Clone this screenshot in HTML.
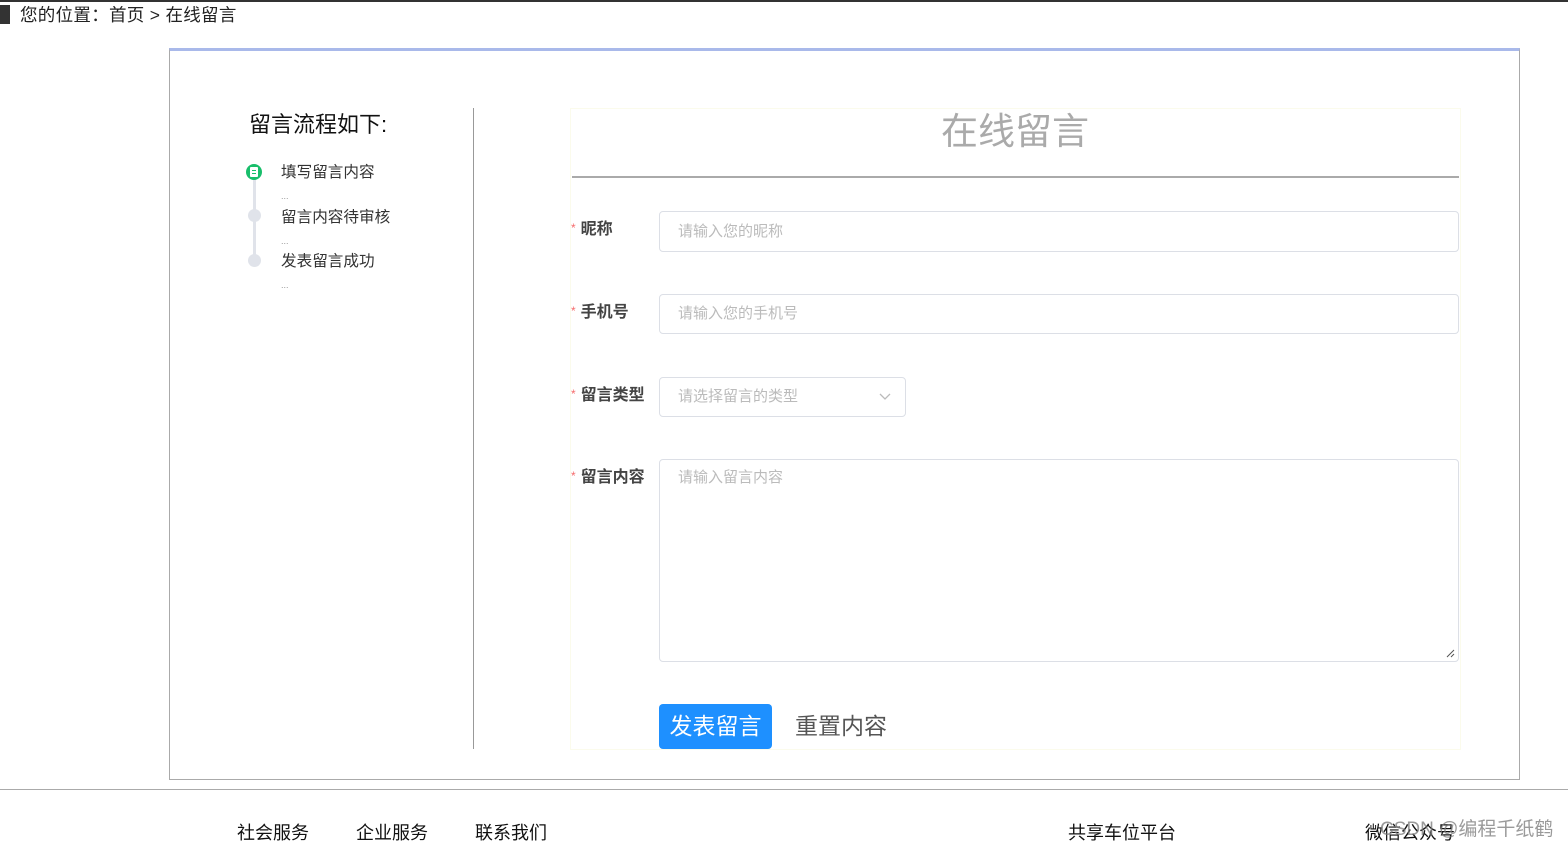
<!DOCTYPE html>
<html><head><meta charset="utf-8"><style>
*{margin:0;padding:0;box-sizing:border-box}
body{width:1568px;height:849px;position:relative;overflow:hidden;background:#fff;font-family:"Liberation Sans","Noto Sans CJK SC",sans-serif;color:#222}
.a{position:absolute;white-space:nowrap}
.inp{position:absolute;border:1px solid #dcdfe6;border-radius:4px;background:#fff;color:#bbb;font-size:15px;padding-left:18px}
.lab{position:absolute;font-size:16px;font-weight:bold;color:#444;line-height:20px}
.lab b{color:#f56c6c;font-size:12px;font-weight:normal;margin-right:5px;position:relative;top:-2px}
</style></head><body>
<div class="a" style="left:0;top:0;width:1568px;height:2px;background:#333"></div>
<div class="a" style="left:0;top:5px;width:10px;height:19px;background:#333"></div>
<div class="a" style="left:20px;top:4px;font-size:17.5px;line-height:22px;letter-spacing:0.3px">您的位置：首页 &gt; 在线留言</div>
<div class="a" style="left:169px;top:48px;width:1351px;height:732px;border:1px solid #aaa;border-top:3px solid #a9b9ea"></div>
<div class="a" style="left:473px;top:108px;width:1px;height:641px;background:#999"></div>
<div class="a" style="left:249px;top:110px;font-size:22px;line-height:30px;color:#111">留言流程如下:</div>
<div class="a" style="left:253px;top:178px;width:3px;height:80px;background:#e0e3ea"></div>
<div class="a" style="left:246px;top:164px;width:16px;height:16px;border-radius:50%;background:#19be6b"><div style="position:absolute;left:4px;top:3px;width:8px;height:10px;background:#fff;border-radius:1px"></div><div style="position:absolute;left:6px;top:6px;width:4px;height:1px;background:#19be6b;box-shadow:0 3px 0 #19be6b"></div></div>
<div class="a" style="left:248px;top:209px;width:13px;height:13px;border-radius:50%;background:#e0e3ea"></div>
<div class="a" style="left:248px;top:254px;width:13px;height:13px;border-radius:50%;background:#e0e3ea"></div>
<div class="a" style="left:281px;top:163px;font-size:15.6px;line-height:20px;color:#333">填写留言内容</div>
<div class="a" style="left:281px;top:191px;font-size:9px;color:#999">...</div>
<div class="a" style="left:281px;top:208px;font-size:15.6px;line-height:20px;color:#333">留言内容待审核</div>
<div class="a" style="left:281px;top:236px;font-size:9px;color:#999">...</div>
<div class="a" style="left:281px;top:252px;font-size:15.6px;line-height:20px;color:#333">发表留言成功</div>
<div class="a" style="left:281px;top:280px;font-size:9px;color:#999">...</div>
<div class="a" style="left:570px;top:108px;width:891px;height:642px;border:1px solid #fbfbec"></div>
<div class="a" style="left:0;top:109px;width:2030px;text-align:center;font-size:37px;line-height:46px;color:#aaa">在线留言</div>
<div class="a" style="left:572px;top:176px;width:887px;height:2px;background:#aaa"></div>
<div class="lab" style="left:571px;top:220px"><b>*</b>昵称</div>
<div class="inp" style="left:659px;top:211px;width:800px;height:41px;line-height:39px">请输入您的昵称</div>
<div class="lab" style="left:571px;top:303px"><b>*</b>手机号</div>
<div class="inp" style="left:659px;top:294px;width:800px;height:40px;line-height:38px">请输入您的手机号</div>
<div class="lab" style="left:571px;top:386px"><b>*</b>留言类型</div>
<div class="inp" style="left:659px;top:377px;width:247px;height:40px;line-height:38px">请选择留言的类型<svg style="position:absolute;right:14px;top:15px" width="12" height="8" viewBox="0 0 12 8"><path d="M1 1l5 5 5-5" fill="none" stroke="#bbb" stroke-width="1.3"/></svg></div>
<div class="lab" style="left:571px;top:468px"><b>*</b>留言内容</div>
<div class="inp" style="left:659px;top:459px;width:800px;height:203px;line-height:36px;padding-top:0">请输入留言内容<svg style="position:absolute;right:3px;bottom:3px" width="9" height="9" viewBox="0 0 9 9"><path d="M1 8L8 1M5 8L8 5" stroke="#555" stroke-width="1"/></svg></div>
<div class="a" style="left:659px;top:704px;width:113px;height:45px;background:#1e90ff;border-radius:4px;color:#fff;font-size:23px;line-height:44px;text-align:center">发表留言</div>
<div class="a" style="left:795px;top:708px;font-size:23px;line-height:36px;color:#555">重置内容</div>
<div class="a" style="left:0;top:789px;width:1568px;height:1px;background:#aaa"></div>
<div class="a" style="left:237px;top:820px;font-size:18px;line-height:26px;color:#111">社会服务</div>
<div class="a" style="left:356px;top:820px;font-size:18px;line-height:26px;color:#111">企业服务</div>
<div class="a" style="left:475px;top:820px;font-size:18px;line-height:26px;color:#111">联系我们</div>
<div class="a" style="left:1068px;top:820px;font-size:18px;line-height:26px;color:#111">共享车位平台</div>
<div class="a" style="left:1365px;top:820px;font-size:18px;line-height:26px;color:#111">微信公众号</div>
<div class="a" style="left:1380px;top:817px;font-size:19px;line-height:26px;color:rgba(120,120,120,.75)">CSDN @编程千纸鹤</div>
</body></html>
